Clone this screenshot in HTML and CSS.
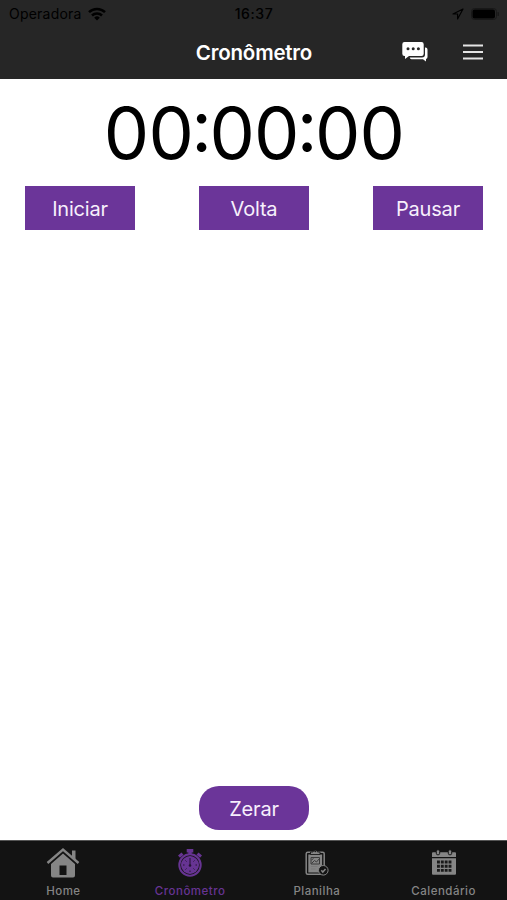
FILE: index.html
```html
<!DOCTYPE html>
<html lang="pt-BR">
<head>
  <meta charset="UTF-8">
  <meta name="viewport" content="width=device-width, initial-scale=1.0">
  <title>Cronômetro</title>
  <link rel="stylesheet" href="styles.css">
</head>
<body>
  <header>
    <div class="status-bar">
      <div class="carrier">
        <span class="carrier-name">Operadora</span>
        <svg width="18" height="14" viewBox="0 0 18 14" fill="none" stroke="#000" stroke-width="2.5">
          <path d="M1 5.2a11.3 11.3 0 0 1 16 0"/>
          <path d="M4 8.5a7.1 7.1 0 0 1 10 0"/>
          <path d="M9 13.5 6.2 10.7a4 4 0 0 1 5.6 0z" fill="#000" stroke="none"/>
        </svg>
      </div>
      <span class="clock">16:37</span>
      <div class="status-icons">
        <svg width="12" height="12" viewBox="0 0 12 12" fill="none" stroke="#000" stroke-width="1.2" stroke-linejoin="round">
          <path d="M11 1 1 6h4.6v5z"/>
        </svg>
        <svg width="28" height="12" viewBox="0 0 28 12">
          <rect x="0.5" y="0.5" width="25" height="11" rx="3" fill="none" stroke="#181818"/>
          <rect x="1.5" y="1.5" width="22.5" height="9" rx="2"/>
          <path d="M26.5 4v4a2 2 0 0 0 0-4z" fill="#181818"/>
        </svg>
      </div>
    </div>
    <div class="nav-bar">
      <h1>Cronômetro</h1>
      <div class="nav-actions">
        <svg width="26" height="20" viewBox="0 0 26 20" fill="#fff">
          <path d="M23 5.5h.5a2 2 0 0 1 2 2v7.5a2 2 0 0 1-1.5 2v2.6L21 17.2H9.5a2 2 0 0 1-1.8-1.6H20a3 3 0 0 0 3-3z"/>
          <path d="M2.5 0h17A2.2 2.2 0 0 1 21.7 2.2v9.6a2.2 2.2 0 0 1-2.2 2.2H7L3 17v-3h-.5A2.2 2.2 0 0 1 .3 11.8V2.200A2.2 2.2 0 0 1 2.5 0z"/>
          <g fill="#262626">
            <circle cx="6" cy="6.8" r="1.5"/>
            <circle cx="11.2" cy="6.8" r="1.5"/>
            <circle cx="16.4" cy="6.8" r="1.5"/>
          </g>
        </svg>
        <svg width="20" height="16" viewBox="0 0 20 16" stroke="#e4e4e4" stroke-width="1.9">
          <path d="M0 1.5h20M0 8h20M0 14.5h20"/>
        </svg>
      </div>
    </div>
  </header>

  <main>
    <div class="timer">00<span>:</span>00<span>:</span>00</div>
    <div class="controls">
      <button class="btn">Iniciar</button>
      <button class="btn">Volta</button>
      <button class="btn">Pausar</button>
    </div>
    <button class="btn btn-reset">Zerar</button>
  </main>

  <nav class="tab-bar">
    <a class="tab">
      <svg width="34" height="32" viewBox="0 0 34 32" fill="currentColor">
        <path d="M26 3.500h3.500v9.500L26 9.800z"/>
        <path d="M1.500 16 17 2.500 32.500 16" fill="none" stroke="currentColor" stroke-width="2.400"/>
        <path fill-rule="evenodd" d="M17 6.500 29 17V28.500a2 2 0 0 1-2 2H7a2 2 0 0 1-2-2V17zM13.500 18.500v9.500h7v-9.500z"/>
      </svg>
      <span>Home</span>
    </a>
    <a class="tab active">
      <svg width="26" height="28" viewBox="0 0 26 28" fill="currentColor">
        <path d="M9.7 0h6.600v3.500h-1.600v2h-3.400v-2H9.700z"/>
        <path d="M1 6.500 4.500 3.500l2 2.300-3.500 3zM25 6.500 21.500 3.500l-2 2.300 3.500 3z"/>
        <circle cx="13" cy="16" r="10.700" fill="none" stroke="currentColor" stroke-width="2"/>
        <circle cx="13" cy="16" r="9"/>
        <path d="M13 9v7M13 23v-1.500M6 16h1.500M18.500 16H20M8.500 11.500l1 1M17.500 11.500l-1 1M8.500 20.500l1-1M17.500 20.500l-1-1" fill="none" stroke="#241333" stroke-width="1"/>
        <circle cx="13" cy="16.500" r="1.300" fill="#241333"/>
      </svg>
      <span>Cronômetro</span>
    </a>
    <a class="tab">
      <svg width="24" height="27" viewBox="0 0 24 27" fill="none" stroke="currentColor">
        <rect x="1.200" y="3.200" width="18" height="22" rx="1.500" stroke-width="1.500"/>
        <rect x="3.300" y="5.500" width="13.800" height="18" fill="currentColor" stroke="none"/>
        <path d="M5.500 5.500V3H8a2.300 2.300 0 0 1 4.500 0H15v2.500z" fill="currentColor" stroke="#131313" stroke-width=".8"/>
        <circle cx="10.200" cy="2.500" r=".8" fill="#131313" stroke="none"/>
        <path d="M6 8.500h8.500v6.500H6zM6.500 14.500l3-3 2 1.500 3-3.500M6.500 11l2-1.500" stroke="#3b3b3b"/>
        <path d="M6 17.500h6.500M6 20h4.500" stroke="#777" stroke-width=".8"/>
        <circle cx="18.300" cy="21.300" r="4.800" fill="#131313" stroke-width="1"/>
        <path d="m16.300 21.300 1.500 1.700 2.700-3" stroke-width="1.500"/>
      </svg>
      <span>Planilha</span>
    </a>
    <a class="tab">
      <svg width="26" height="27" viewBox="0 0 26 27" fill="currentColor">
        <path d="M2 3.200h22a1 1 0 0 1 1 1V8H1V4.200a1 1 0 0 1 1-1zM1 9.200h24v15.600a1 1 0 0 1-1 1H2a1 1 0 0 1-1-1z"/>
        <g stroke="#131313">
          <rect x="5.300" y=".8" width="3.400" height="5" rx="1.500"/>
          <rect x="17.300" y=".8" width="3.400" height="5" rx="1.500"/>
        </g>
        <path d="M6 13h14.500M6 17.200h14.500M6 21.400h14.500" stroke="#1a1a1a" stroke-width="2.900" stroke-dasharray="2.900 .95"/>
      </svg>
      <span>Calendário</span>
    </a>
  </nav>
</body>
</html>
```
FILE: styles.css
```css
* {
  box-sizing: border-box;
}
body {
  font-family: Inter, 'Liberation Sans', sans-serif;
  margin: 0;
  height: 100vh;
  display: flex;
  flex-direction: column;
  background: #fff;
  color: #000;
}
svg {
  display: block;
}
header {
  height: 79px;
  background: #262626;
}
.status-bar {
  height: 27px;
  padding: 0 8px 0 9px;
  display: grid;
  grid-template-columns: 1fr auto 1fr;
  align-items: center;
  font-size: 14px;
}
.carrier {
  display: flex;
  align-items: center;
  gap: 6px;
}
.carrier-name {
  letter-spacing: 0.22px;
}
.clock {
  font-weight: 500;
  letter-spacing: 0.6px;
}
.status-icons {
  display: flex;
  align-items: center;
  justify-content: flex-end;
  gap: 7px;
}
.nav-bar {
  height: 50px;
  padding: 0 24px 0 25px;
  display: grid;
  grid-template-columns: 1fr auto 1fr;
  align-items: center;
}
h1 {
  grid-column: 2;
  margin: 0;
  font-size: 20.5px;
  font-weight: 600;
  letter-spacing: -0.2px;
  color: #fff;
}
.nav-actions {
  display: flex;
  align-items: center;
  justify-content: flex-end;
  gap: 35px;
}
main {
  flex: 1;
  display: flex;
  flex-direction: column;
  padding: 17px 24px 10px 25px;
}
.timer {
  font-size: 72px;
  line-height: 74px;
  letter-spacing: -0.8px;
  text-align: center;
  white-space: nowrap;
}
/* tighter colons, raised to the middle of the digits */
.timer span {
  margin: 0 -1.8px;
  font-feature-settings: "case";
}
.controls {
  display: flex;
  justify-content: space-between;
  margin-top: 16px;
}
.btn {
  width: 110px;
  height: 44px;
  padding: 1px 0 0;
  border: none;
  background: #6b3599;
  color: #f7effc;
  font-family: inherit;
  font-size: 20px;
  letter-spacing: -0.2px;
}
.btn-reset {
  margin: auto auto 0;
  border-radius: 20px;
}
.tab-bar {
  height: 60px;
  display: grid;
  grid-template-columns: repeat(4, 1fr);
  background: #131313;
  border-top: 1px solid #555;
}
.tab {
  display: flex;
  flex-direction: column;
  align-items: center;
  color: #858585;
  font-size: 11.5px;
  font-weight: 500;
  line-height: 14px;
  letter-spacing: 0.5px;
}
.tab svg {
  margin: auto 0;
}
.tab span {
  margin-bottom: 2px;
}
.tab.active {
  color: #673493;
}
```
